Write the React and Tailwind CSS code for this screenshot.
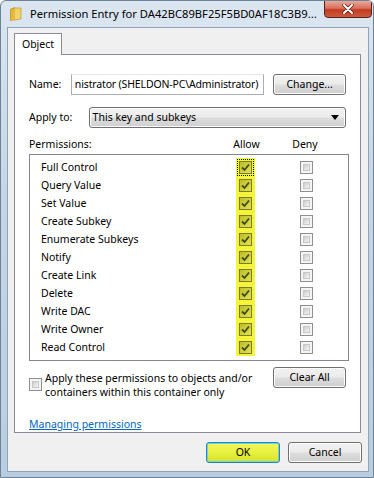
import React from 'react';

const perms = [
  'Full Control',
  'Query Value',
  'Set Value',
  'Create Subkey',
  'Enumerate Subkeys',
  'Notify',
  'Create Link',
  'Delete',
  'Write DAC',
  'Write Owner',
  'Read Control',
];

const btn =
  'flex items-center justify-center rounded-[3px] border border-[#707070] bg-[linear-gradient(#f2f2f2_0%,#ebebeb_48%,#dddddd_52%,#cfcfcf_100%)] shadow-[inset_0_0_0_1px_#fcfcfc] text-[#000]';

function FolderIcon() {
  return (
    <svg width="14" height="16" viewBox="0 0 14 16">
      <path d="M1 3 L6 1 L6 14 L1 15 Z" fill="#c9a227" />
      <path d="M5 2 L12 2 L12 13 L5 14 Z" fill="#f3d36b" stroke="#b58f1e" strokeWidth="0.6" />
      <path d="M2 4 L5 3 L5 14 L2 15 Z" fill="#e5b93a" />
    </svg>
  );
}

function AllowBox({ focus }) {
  return (
    <div className="w-[19px] h-[18px] bg-[#f4f43a] flex items-center justify-center">
      <div className={`flex items-center justify-center w-[17px] h-[17px] ${focus ? 'outline outline-1 outline-dotted outline-black -outline-offset-1' : ''}`}>
        <div className="w-[13px] h-[13px] border border-[#7c7c24] bg-[linear-gradient(135deg,#bcbc30,#e2e24a)] flex items-center justify-center">
          <svg width="9" height="9" viewBox="0 0 9 9">
            <path d="M1 4.5 L3.5 7 L8 1.5" fill="none" stroke="#3f4a10" strokeWidth="1.8" />
          </svg>
        </div>
      </div>
    </div>
  );
}

function EmptyBox() {
  return (
    <div className="w-[13px] h-[13px] border border-[#8e8f8f] bg-[#f4f4f4] p-[2px]">
      <div className="w-full h-full bg-[linear-gradient(135deg,#cbcbcb,#f6f6f6)] border border-[#c8c8c8]" />
    </div>
  );
}

export default function App() {
  return (
    <div className="w-[374px] h-[478px] bg-[linear-gradient(180deg,#dbe6f1_0%,#c5d6e7_40%,#b9cde2_100%)] border border-[#6f8397] rounded-t-[6px] flex flex-col font-['Noto_Sans',sans-serif] text-[10.5px] text-[#000] overflow-hidden">
      {/* Title bar */}
      <div className="h-[26px] flex items-start pl-[8px] shrink-0">
        <div className="mt-[5px]">
          <FolderIcon />
        </div>
        <div className="ml-[7px] mt-[5px] text-[11.2px] leading-[16px] flex-1 whitespace-nowrap">
          Permission Entry for DA42BC89BF25F5BD0AF18C3B9...
        </div>
        <div className="mr-[1px] -mt-[1px] w-[48px] h-[18px] rounded-b-[4px] border border-[#5a1f18] bg-[linear-gradient(#e9a89b_0%,#d8705d_45%,#c23a22_55%,#cf5a3c_100%)] flex items-center justify-center shrink-0">
          <svg width="12" height="10" viewBox="0 0 12 10">
            <path d="M2 1 L10 9 M10 1 L2 9" stroke="#4a1e18" strokeWidth="3.4" strokeLinecap="round" />
            <path d="M2 1 L10 9 M10 1 L2 9" stroke="#ffffff" strokeWidth="2" strokeLinecap="round" />
          </svg>
        </div>
      </div>

      {/* Client area */}
      <div className="ml-[6px] mr-[4px] h-[445px] bg-[#f0f0f0] border border-[#8fa2b6] flex flex-col px-[6px] pt-[5px]">
        {/* Tab */}
        <div className="flex">
          <div className="w-[48px] h-[22px] bg-white border border-[#898c95] border-b-0 flex items-center justify-center relative z-10 -mb-px">
            Object
          </div>
        </div>
        <div className="w-[347px] h-[379px] bg-white border border-[#898c95] flex flex-col pl-[14px] pr-[14px]">
          {/* Name */}
          <div className="flex items-center mt-[19px] h-[21px]">
            <div className="w-[42px]">Name:</div>
            <div className="w-[194px] h-[21px] border border-[#abadb3] border-t-[#e3e9ef] bg-white flex items-center pl-[3px] whitespace-nowrap overflow-hidden tracking-[-0.15px]">
              nistrator (SHELDON-PC\Administrator)
            </div>
            <div className={`${btn} ml-[9px] w-[73px] h-[21px]`}>Change...</div>
          </div>
          {/* Apply to */}
          <div className="flex items-center mt-[12px] h-[21px]">
            <div className="w-[60px]">Apply to:</div>
            <div className={`${btn} w-[259px] h-[21px] justify-between! pl-[3px] pr-[6px]`}>
              <span>This key and subkeys</span>
              <svg width="8" height="5" viewBox="0 0 8 5">
                <path d="M0 0 L8 0 L4 5 Z" fill="#000" />
              </svg>
            </div>
          </div>
          {/* Header */}
          <div className="flex items-center mt-[10px] h-[14px]">
            <div className="w-[201px]">Permissions:</div>
            <div className="w-[33px] text-center">Allow</div>
            <div className="w-[27px]" />
            <div className="w-[30px] text-center">Deny</div>
          </div>
          {/* Permissions list */}
          <div className="mt-[2px] w-[320px] h-[207px] border border-[#828790] bg-white pt-[3px] flex flex-col">
            {perms.map((p, i) => (
              <div key={p} className="flex items-center h-[18px]">
                <div className="w-[206px] pl-[11px] leading-[18px]">{p}</div>
                <AllowBox focus={i === 0} />
                <div className="w-[45px]" />
                <EmptyBox />
              </div>
            ))}
          </div>
          {/* Apply checkbox row */}
          <div className="flex items-start mt-[6px]">
            <div className="mt-[11px]">
              <EmptyBox />
            </div>
            <div className="ml-[3px] w-[210px] leading-[14px] mt-[4px]">
              Apply these permissions to objects and/or containers within this container only
            </div>
            <div className={`${btn} ml-[19px] w-[73px] h-[21px]`}>Clear All</div>
          </div>
          {/* Link */}
          <div className="mt-[17px] text-[#0066cc] underline leading-[16px]">Managing permissions</div>
        </div>
        {/* Bottom buttons */}
        <div className="flex justify-end gap-[8px] mt-[9px]">
          <div className="w-[74px] h-[21px] rounded-[3px] border border-[#2a84b8] bg-[linear-gradient(#f0f75a_0%,#e8f040_50%,#d9e228_100%)] shadow-[inset_0_0_0_1px_#5fd6f0] flex items-center justify-center text-[#000]">
            OK
          </div>
          <div className={`${btn} w-[74px] h-[21px]`}>Cancel</div>
        </div>
      </div>
    </div>
  );
}
